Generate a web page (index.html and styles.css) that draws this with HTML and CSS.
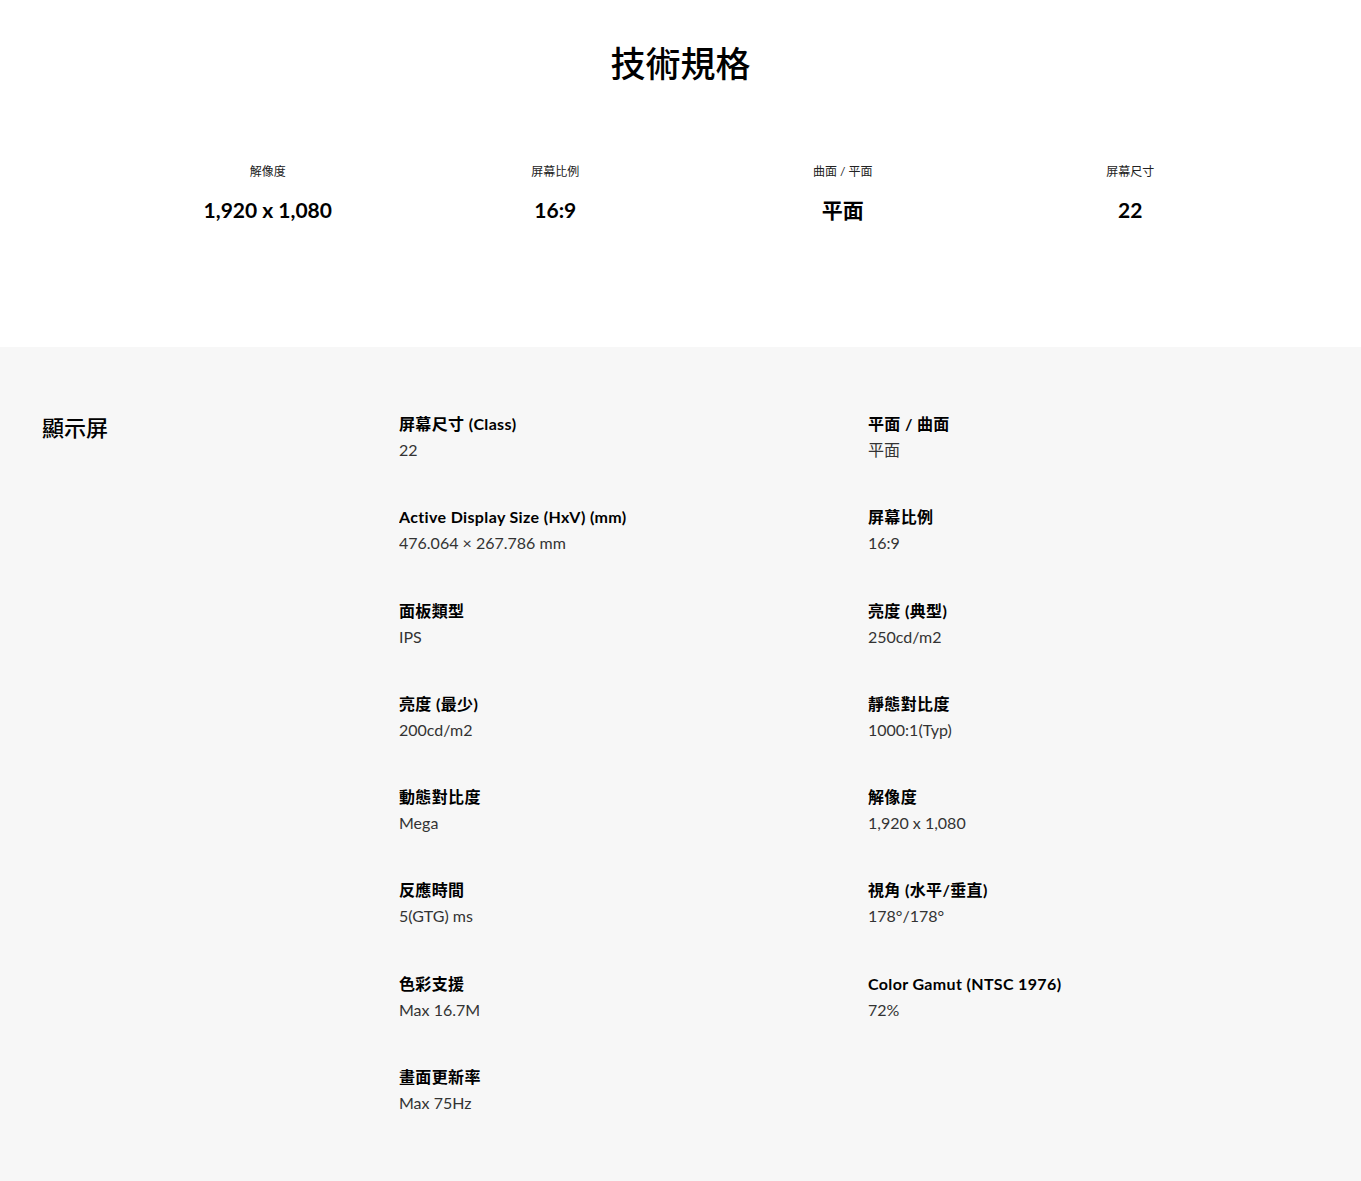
FILE: index.html
```html
<!DOCTYPE html>
<html lang="zh-Hant">
<head>
<meta charset="utf-8">
<title>技術規格</title>
<link rel="stylesheet" href="styles.css">
</head>
<body>
<section class="top">
  <h2 class="title">技術規格</h2>
  <div class="summary">
    <div class="sum-item"><div class="sum-label">解像度</div><div class="sum-value">1,920 x 1,080</div></div>
    <div class="sum-item"><div class="sum-label">屏幕比例</div><div class="sum-value">16:9</div></div>
    <div class="sum-item"><div class="sum-label">曲面 / 平面</div><div class="sum-value">平面</div></div>
    <div class="sum-item"><div class="sum-label">屏幕尺寸</div><div class="sum-value">22</div></div>
  </div>
</section>
<section class="specs">
  <h3 class="cat">顯示屏</h3>
  <div class="list">
    <div class="spec"><div class="name">屏幕尺寸 (Class)</div><div class="val">22</div></div>
    <div class="spec"><div class="name">平面 / 曲面</div><div class="val">平面</div></div>
    <div class="spec"><div class="name">Active Display Size (HxV) (mm)</div><div class="val">476.064 × 267.786 mm</div></div>
    <div class="spec"><div class="name">屏幕比例</div><div class="val">16:9</div></div>
    <div class="spec"><div class="name">面板類型</div><div class="val">IPS</div></div>
    <div class="spec"><div class="name">亮度 (典型)</div><div class="val">250cd/m2</div></div>
    <div class="spec"><div class="name">亮度 (最少)</div><div class="val">200cd/m2</div></div>
    <div class="spec"><div class="name">靜態對比度</div><div class="val">1000:1(Typ)</div></div>
    <div class="spec"><div class="name">動態對比度</div><div class="val">Mega</div></div>
    <div class="spec"><div class="name">解像度</div><div class="val">1,920 x 1,080</div></div>
    <div class="spec"><div class="name">反應時間</div><div class="val">5(GTG) ms</div></div>
    <div class="spec"><div class="name">視角 (水平/垂直)</div><div class="val">178°/178°</div></div>
    <div class="spec"><div class="name">色彩支援</div><div class="val">Max 16.7M</div></div>
    <div class="spec"><div class="name">Color Gamut (NTSC 1976)</div><div class="val">72%</div></div>
    <div class="spec"><div class="name">畫面更新率</div><div class="val">Max 75Hz</div></div>
  </div>
</section>
</body>
</html>
```
FILE: styles.css
```css
* { box-sizing: border-box; }
html, body { margin: 0; padding: 0; }
body {
  font-family: Lato, "Noto Sans CJK TC", sans-serif;
  color: #000;
  background: #fff;
}
.top {
  height: 347px;
  padding-top: 40px;
}
.title {
  margin: 0;
  text-align: center;
  font-size: 35px;
  font-weight: 500;
  line-height: 46px;
}
.summary {
  display: grid;
  grid-template-columns: repeat(4, 287.5px);
  margin-left: 124px;
  margin-top: 78px;
}
.sum-item { text-align: center; }
.sum-label {
  font-size: 12px;
  line-height: 16px;
  color: #222;
}
.sum-value {
  margin-top: 17px;
  font-size: 21px;
  font-weight: 700;
  line-height: 26px;
}
.specs {
  background: #f7f7f7;
  height: 834px;
  display: grid;
  grid-template-columns: 357px 1fr;
  align-items: start;
  padding: 65px 0 0 42px;
}
.cat {
  margin: 0;
  padding-top: 1px;
  font-size: 22px;
  font-weight: 500;
  line-height: 30px;
}
.list {
  display: grid;
  grid-template-columns: 469px 1fr;
  grid-auto-rows: 54px;
  row-gap: 39.3px;
}
.spec { height: 54px; overflow: hidden; }
.name {
  height: 24px;
  font-size: 16px;
  font-weight: 700;
  letter-spacing: 0.35px;
  line-height: 24px;
}
.val {
  margin-top: 2px;
  height: 24px;
  font-size: 16px;
  font-weight: 400;
  line-height: 24px;
  color: #333;
}
```
